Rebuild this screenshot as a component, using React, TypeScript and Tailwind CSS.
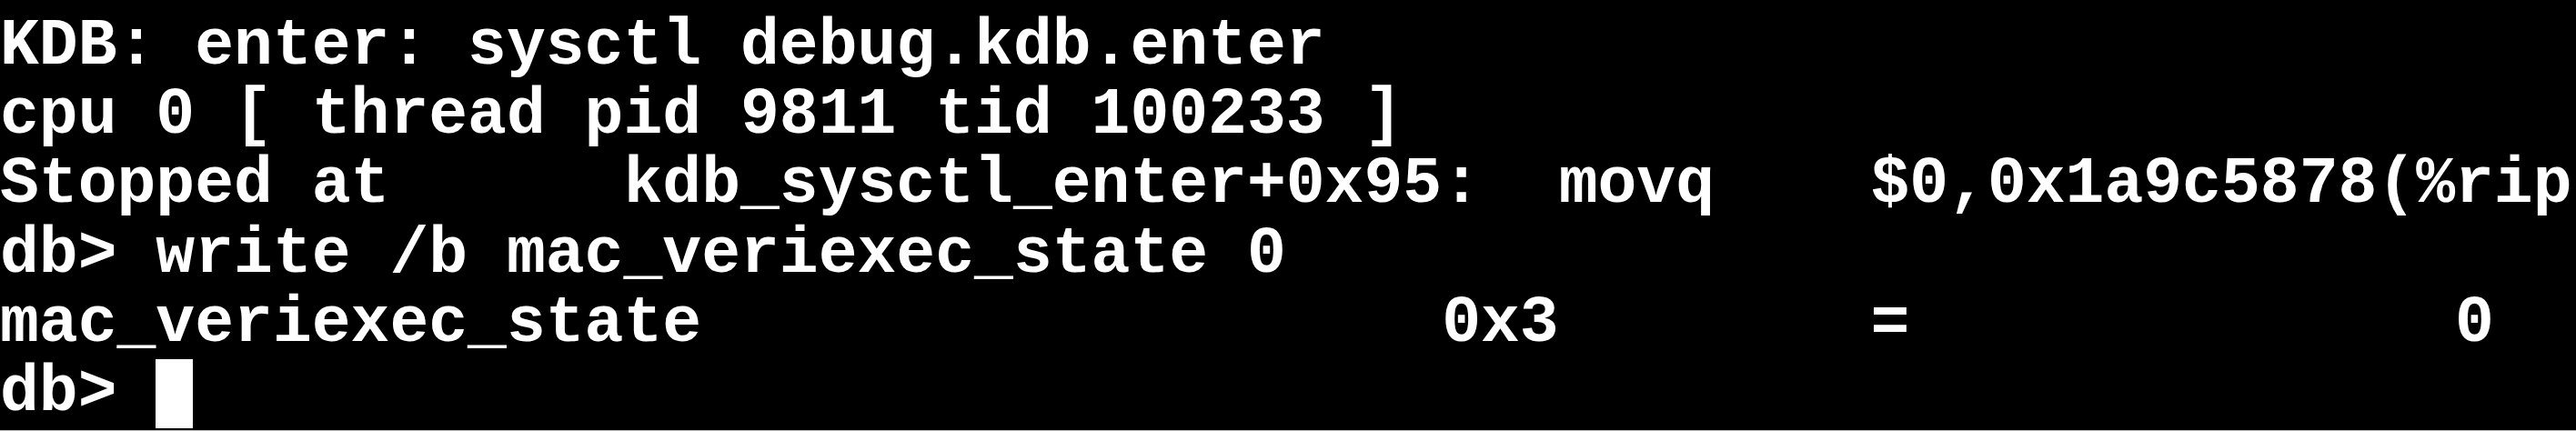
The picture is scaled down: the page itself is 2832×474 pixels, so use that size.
import React from "react";

const lines: string[] = [
  "KDB: enter: sysctl debug.kdb.enter",
  "cpu 0 [ thread pid 9811 tid 100233 ]",
  "Stopped at      kdb_sysctl_enter+0x95:  movq    $0,0x1a9c5878(%rip",
  "db> write /b mac_veriexec_state 0",
  "mac_veriexec_state                   0x3        =              0",
];

export default function App() {
  return (
    <div className="w-[2832px] h-[474px] bg-black overflow-hidden flex flex-col">
      <div
        className="flex-1 overflow-hidden pt-[13px] text-white font-bold whitespace-pre text-[71.4px] leading-[76.2px]"
        style={{ fontFamily: '"Liberation Mono", "DejaVu Sans Mono", monospace' }}
      >
        {lines.map((l, i) => (
          <div key={i} className="h-[76.2px]">
            {l}
          </div>
        ))}
        <div className="h-[76.2px]">
          {"db> "}
          <span className="inline-block align-top mt-[1px] w-[41px] h-[76px] bg-white" />
        </div>
      </div>
      <div className="h-[1px] bg-[#c0c0c0]" />
    </div>
  );
}
